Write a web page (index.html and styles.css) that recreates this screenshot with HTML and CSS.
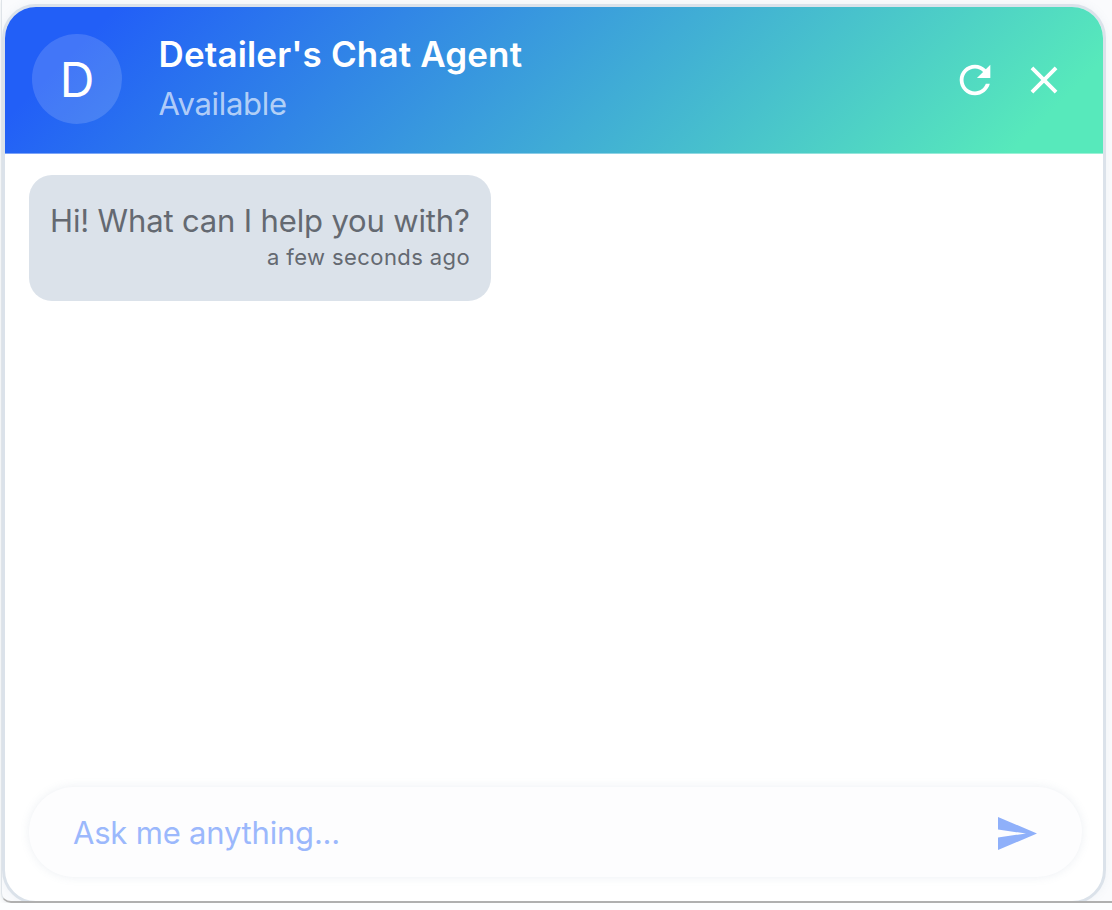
FILE: index.html
```
<!DOCTYPE html>
<html lang="en">
<head>
    <meta charset="UTF-8">
    <meta name="viewport" content="width=device-width, initial-scale=1.0">
    <title>Detailer's Chat Agent</title>
    <link rel="stylesheet" href="styles.css">
</head>
<body>
    <div class="frame">
        <div class="chat">
            <header class="chat-header">
                <div class="avatar"><span>D</span></div>
                <div class="agent">
                    <h1><span>Detailer's Chat Agent</span></h1>
                    <p><span>Available</span></p>
                </div>
                <div class="actions">
                    <button type="button" aria-label="Restart chat">
                        <svg width="46" height="46" viewBox="0 0 24 24" fill="#fff"><path d="M17.65 6.35C16.2 4.9 14.21 4 12 4c-4.42 0-7.99 3.58-7.99 8s3.57 8 7.99 8c3.73 0 6.84-2.55 7.73-6h-2.08c-.82 2.33-3.04 4-5.65 4-3.31 0-6-2.69-6-6s2.69-6 6-6c1.66 0 3.14.69 4.22 1.78L13 11h7V4l-2.35 2.35z"/></svg>
                    </button>
                    <button type="button" aria-label="Close chat">
                        <svg width="46" height="46" viewBox="0 0 24 24" fill="#fff"><path d="M19 6.41 17.59 5 12 10.59 6.41 5 5 6.41 10.59 12 5 17.59 6.41 19 12 13.41 17.59 19 19 17.59 13.41 12z"/></svg>
                    </button>
                </div>
            </header>

            <main class="messages">
                <div class="message">
                    <p class="message-text"><span>Hi! What can I help you with?</span></p>
                    <p class="message-time"><span>a few seconds ago</span></p>
                </div>
            </main>

            <form class="composer" onsubmit="return false;">
                <input type="text" placeholder="Ask me anything..." aria-label="Message">
                <button type="submit" aria-label="Send">
                    <svg width="39" height="33" viewBox="0 0 39 33" fill="#8fb0fa"><path d="M0 0 39 16.5 0 33V20.4L28 16.5 0 12.6z"/></svg>
                </button>
            </form>
        </div>
    </div>
</body>
</html>
```
FILE: styles.css
```
* {
    box-sizing: border-box;
}

body {
    margin: 0;
    background: #fdfeff;
    font-family: Inter, Roboto, sans-serif;
    overflow: hidden;
}

h1, p {
    margin: 0;
}

button {
    display: flex;
    padding: 0;
    border: none;
    background: none;
    cursor: pointer;
}

.frame {
    width: 1131px;
    height: 903px;
    margin-left: 1px;
    border-left: 1px solid #dfe4e9;
    border-bottom: 2px solid #b0b0b0;
    border-radius: 0 0 0 10px;
    box-shadow: 0 1px 4px rgba(60, 70, 80, 0.12);
    background: #fafbfd;
    overflow: hidden;
}

.chat {
    display: flex;
    flex-direction: column;
    width: 1104px;
    height: 900px;
    margin-top: 4px;
    border: 3px solid #dbe2ea;
    border-radius: 34px;
    background: #fff;
    box-shadow: 0 0 10px rgba(120, 140, 170, 0.08);
    overflow: hidden;
}

.chat-header {
    display: flex;
    align-items: center;
    height: 147px;
    padding: 0 36px 0 27px;
    border-bottom: 1px solid rgba(255, 255, 255, 0.4);
    background: linear-gradient(135deg, #225ff7 9%, #57e9bb 92.5%) border-box;
    color: #fff;
    flex-shrink: 0;
}

.avatar {
    display: flex;
    align-items: center;
    justify-content: center;
    width: 90px;
    height: 90px;
    margin: 0 36.5px 2px 0;
    border-radius: 50%;
    background: rgba(255, 255, 255, 0.15);
    font-size: 48px;
}

.agent {
    flex: 1;
    padding-bottom: 2px;
}

.agent h1 {
    font-size: 35px;
    font-weight: 600;
    line-height: 50px;
    letter-spacing: 0.15px;
}

.agent p {
    font-size: 31px;
    line-height: 50px;
    letter-spacing: -0.3px;
    color: rgba(255, 255, 255, 0.65);
}

.actions {
    display: flex;
    gap: 23px;
}

.messages {
    flex: 1;
    padding: 21px 24px;
}

.message {
    width: 462px;
    height: 126px;
    padding: 25px 21px 0;
    border-radius: 23px;
    background: #dbe2ea;
    color: #646971;
}

.message-text {
    font-size: 31px;
    line-height: 42px;
    letter-spacing: -0.15px;
    white-space: nowrap;
}

.message-time {
    font-size: 22px;
    line-height: 30px;
    letter-spacing: 0.4px;
    text-align: right;
}

.composer {
    display: flex;
    align-items: center;
    height: 90px;
    margin: 0 21px 24px 24px;
    padding: 0 45px 0 44px;
    border-radius: 45px;
    background: #fdfdfe;
    box-shadow: 0 0 10px rgba(120, 140, 170, 0.14);
    flex-shrink: 0;
}

.composer button {
    padding-top: 3px;
}

.composer input {
    flex: 1;
    padding: 0;
    border: none;
    outline: none;
    background: none;
    font: 31px Inter, Roboto, sans-serif;
    letter-spacing: -0.2px;
}

.composer input::placeholder {
    color: #9bb8fc;
}
```
